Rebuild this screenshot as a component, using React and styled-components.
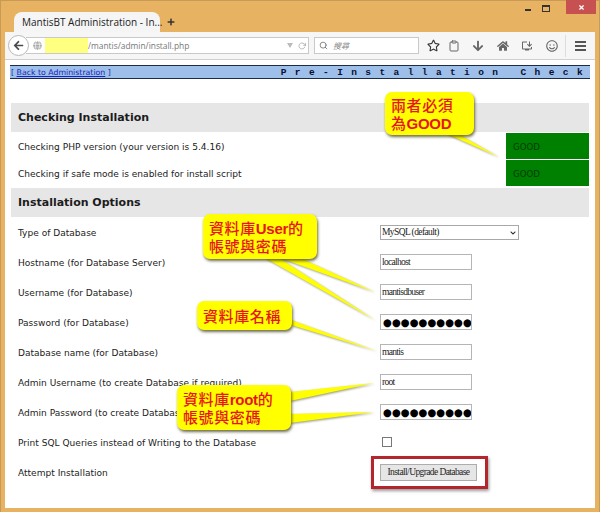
import React from "react";
import styled, { createGlobalStyle } from "styled-components";
import { FaRegStar, FaArrowLeft, FaArrowDown, FaHome, FaRegSmile, FaGlobe, FaPlus, FaTimes, FaChevronDown } from "react-icons/fa";
import { FiSearch, FiRotateCw, FiClipboard } from "react-icons/fi";
import { MdOutlineInstallDesktop } from "react-icons/md";

const Global = createGlobalStyle`
  html, body { margin: 0; padding: 0; background: #e8b263; }
  * { box-sizing: border-box; }
`;

const Window = styled.div`
  position: relative;
  width: 600px;
  height: 512px;
  overflow: hidden;
  background: #e8b263;
  box-shadow: inset 0 1px 0 #c99a55, inset 1px 0 0 #c99a55, inset -1px 0 0 #c99a55;
  padding: 0 5px 4px 5px;
  display: flex;
  flex-direction: column;
  font-family: "DejaVu Sans", Verdana, sans-serif;
`;

const TitleBar = styled.div`
  height: 32px;
  display: flex;
  align-items: flex-end;
  padding-left: 9px;
  position: relative;
`;

const Tab = styled.div`
  width: 146px;
  height: 20px;
  background: #f5f5f5;
  border-radius: 8px 8px 0 0;
  display: flex;
  align-items: center;
  justify-content: space-between;
  padding: 0 8px;
  font-family: "Open Sans", sans-serif;
  font-size: 10px;
  color: #222;
  white-space: nowrap;
`;

const NewTab = styled.div`
  margin: 0 0 6px 7px;
  display: flex;
  color: #333;
  font-size: 8px;
`;

const WindowControls = styled.div`
  position: absolute;
  top: 0;
  right: -1px;
  display: flex;
  align-items: flex-start;
  gap: 11px;
`;

const MinButton = styled.span`
  width: 6px;
  height: 2px;
  margin-top: 9px;
  background: #333;
`;

const MaxButton = styled.span`
  width: 8px;
  height: 7px;
  margin: 5px 5px 0 0;
  border: 1px solid #333;
  border-top-width: 2px;
`;

const CloseButton = styled.span`
  width: 30px;
  height: 14px;
  background: #c75050;
  color: #fff;
  display: flex;
  align-items: center;
  justify-content: center;
  font-size: 7px;
`;

const Toolbar = styled.div`
  height: 28px;
  background: #f6f6f6;
  border-bottom: 1px solid #d0d0d0;
  display: flex;
  align-items: center;
  padding-left: 3px;
`;

const BackButton = styled.div`
  width: 21px;
  height: 21px;
  border-radius: 50%;
  background: #fff;
  border: 1px solid #b8b8b8;
  margin-right: -3px;
  position: relative;
  display: flex;
  align-items: center;
  justify-content: center;
  color: #4a4a4a;
  font-size: 11px;
`;

const UrlBar = styled.div`
  width: 283px;
  height: 17px;
  background: #fff;
  border: 1px solid #c9c9c9;
  border-left: 0;
  display: flex;
  align-items: center;
  padding-left: 7px;
  font-family: "Open Sans", sans-serif;
  font-size: 8.4px;
  color: #777;
`;

const Masked = styled.span`
  width: 43px;
  height: 15px;
  background: #ffff80;
  margin-left: 3px;
`;

const UrlEnd = styled.span`
  margin-left: auto;
  display: flex;
  align-items: center;
  gap: 5px;
  padding-right: 2px;
  color: #999;
  font-size: 8px;
`;

const DropTriangle = styled.span`
  width: 0;
  height: 0;
  border: 3px solid transparent;
  border-top: 5px solid #bbb;
  border-bottom: 0;
`;

const SearchBar = styled.div`
  width: 105px;
  height: 17px;
  margin-left: 5px;
  background: #fff;
  border: 1px solid #c9c9c9;
  display: flex;
  align-items: center;
  gap: 5px;
  padding-left: 4px;
  font-family: "Noto Sans CJK TC", sans-serif;
  font-style: italic;
  font-size: 8px;
  color: #888;
`;

const ToolIcons = styled.div`
  display: flex;
  align-items: center;
  margin-left: 4px;
`;

const ToolIcon = styled.span`
  width: ${({ $w }) => $w || 24}px;
  display: flex;
  justify-content: center;
  font-size: ${({ $size }) => $size || 12}px;
  color: ${({ $light }) => ($light ? "#666" : "#333")};
`;

const Separator = styled.span`
  width: 1px;
  height: 22px;
  background: #ddd;
  margin-right: 9px;
`;

const Burger = styled.span`
  width: 11px;
  height: 10px;
  border-top: 2px solid #555;
  border-bottom: 2px solid #555;
  position: relative;
  &::after {
    content: "";
    position: absolute;
    left: 0;
    right: 0;
    top: 2px;
    height: 2px;
    background: #555;
  }
`;

const Page = styled.main`
  flex: 1;
  background: #fff;
  padding: 5px 5px 0 5px;
  font-size: 9.05px;
  color: #222;
`;

const Banner = styled.div`
  height: 14px;
  background: #9dbfe9;
  border-top: 1px solid #1c2c44;
  border-bottom: 1px solid #1c2c44;
  display: flex;
  align-items: center;
  justify-content: space-between;
  font-size: 7.8px;
  color: #1f2f9a;
  padding-left: 1px;
`;

const BackLink = styled.a`
  color: #1a22c0;
  text-decoration: underline;
`;

const BannerTitle = styled.span`
  font-family: "Liberation Mono", monospace;
  font-weight: bold;
  font-size: 9.5px;
  letter-spacing: 8.4px;
  color: #0a0f30;
  white-space: pre;
  margin-right: -1px;
`;

const Sections = styled.div`
  margin: 24px 1px 0 1px;
`;

const SectionHeader = styled.h2`
  margin: 0;
  height: 29px;
  background: #e6e6e6;
  padding-left: 7px;
  display: flex;
  align-items: center;
  font-size: 11px;
  font-weight: bold;
  color: #1c1c1c;
`;

const CheckRow = styled.div`
  height: 26px;
  margin-top: 1px;
  display: grid;
  grid-template-columns: 495px 83px;
  align-items: stretch;
`;

const RowLabel = styled.span`
  padding: 1px 0 0 7px;
  display: flex;
  align-items: center;
  white-space: nowrap;
`;

const Status = styled.span`
  background: #008000;
  color: #033a03;
  padding: 1px 0 0 7px;
  display: flex;
  align-items: center;
  font-size: 8.6px;
`;

const OptionsHeader = styled(SectionHeader)`
  margin-top: 2px;
`;

const FormRow = styled.div`
  height: 30px;
  display: grid;
  grid-template-columns: 369px 1fr;
  align-items: center;
`;

const ControlCell = styled.div`
  display: flex;
  align-items: center;
`;

const SelectBox = styled.div`
  position: relative;
  display: flex;
  width: 139px;
  color: #222;
  & > svg {
    position: absolute;
    right: 3px;
    top: 5px;
    pointer-events: none;
  }
`;

const Select = styled.select`
  appearance: none;
  width: 100%;
  height: 15px;
  font-family: "Liberation Serif", serif;
  font-size: 9.5px;
  letter-spacing: -0.6px;
  color: #222;
  background: #fff;
  border: 1px solid #a8a8a8;
  padding: 0 0 0 1px;
`;

const TextInput = styled.input`
  width: 92px;
  height: 16px;
  border: 1px solid #b5b5b5;
  padding: 0 1px;
  font-family: "Liberation Serif", serif;
  font-size: 9.5px;
  letter-spacing: -0.7px;
  color: #222;
  outline: none;
`;

const SecretInput = styled(TextInput)`
  font-family: "DejaVu Sans", sans-serif;
  font-size: 10.2px;
  color: #000;
  letter-spacing: 0;
  padding: 0 0 0 2px;
`;

const Check = styled.input`
  appearance: none;
  width: 10px;
  height: 10px;
  margin: 0 0 0 2px;
  border: 1px solid #777;
  background: #fff;
`;

const SubmitButton = styled.button`
  width: 97px;
  height: 17px;
  padding: 0;
  background: #e6e6e6;
  border: 1px solid #adadad;
  font-family: "Liberation Serif", serif;
  font-size: 9.5px;
  letter-spacing: -0.6px;
  white-space: nowrap;
  color: #222;
`;

const Highlight = styled.div`
  position: absolute;
  left: 371px;
  top: 456px;
  width: 117px;
  height: 33px;
  border: 3px solid #b3262e;
  box-shadow: 1px 2px 3px rgba(0, 0, 0, 0.4);
`;

const Tails = styled.svg`
  position: absolute;
  inset: 0;
  pointer-events: none;
  filter: drop-shadow(1px 1px 1px rgba(60, 60, 0, 0.55));
`;

const Callout = styled.div`
  position: absolute;
  left: ${({ $x }) => $x}px;
  top: ${({ $y }) => $y}px;
  width: ${({ $w }) => $w}px;
  height: ${({ $h }) => $h}px;
  background: #ffff00;
  border-radius: 7px;
  box-shadow: 1px 2px 3px rgba(50, 50, 0, 0.7);
  padding-left: 6px;
  display: flex;
  flex-direction: column;
  justify-content: center;
  font-family: "Noto Sans CJK TC", sans-serif;
  font-weight: 500;
  font-size: 15px;
  letter-spacing: 0.6px;
  color: #e8141c;
  white-space: nowrap;
`;

const CalloutLine = styled.div`
  height: 18px;
  line-height: 18px;
`;

const Latin = styled.b`
  font-family: "Liberation Sans", sans-serif;
  font-weight: bold;
  letter-spacing: -0.3px;
`;

const tailPoints = [
  "447,134 458,134 499,157",
  "280,258 300,258 375,292",
  "265,258 279,258 375,320",
  "291,320 291,325 377,351",
  "290,392 290,401 374,383",
  "290,414 290,423 374,412",
];

export default function App() {
  return (
    <Window>
      <Global />
      <TitleBar>
        <Tab>
          <span>MantisBT Administration - In...</span>
          <FaTimes size={7} color="#555" />
        </Tab>
        <NewTab><FaPlus /></NewTab>
        <WindowControls>
          <MinButton />
          <MaxButton />
          <CloseButton><FaTimes /></CloseButton>
        </WindowControls>
      </TitleBar>
      <Toolbar>
        <BackButton><FaArrowLeft /></BackButton>
        <UrlBar>
          <FaGlobe size={9} color="#aaa" />
          <Masked />
          <span>/mantis/admin/install.php</span>
          <UrlEnd><DropTriangle /><FiRotateCw /></UrlEnd>
        </UrlBar>
        <SearchBar><FiSearch size={9} color="#666" /><span>搜尋</span></SearchBar>
        <ToolIcons>
          <ToolIcon $w={20} $size={13}><FaRegStar /></ToolIcon>
          <ToolIcon $w={22} $light><FiClipboard /></ToolIcon>
          <ToolIcon $w={26} $light><FaArrowDown /></ToolIcon>
          <ToolIcon $w={24} $light><FaHome /></ToolIcon>
          <ToolIcon $w={24} $light><MdOutlineInstallDesktop /></ToolIcon>
          <ToolIcon $w={26} $light><FaRegSmile /></ToolIcon>
          <Separator />
          <Burger />
        </ToolIcons>
      </Toolbar>
      <Page>
        <Banner>
          <span>[ <BackLink>Back to Administration</BackLink> ]</span>
          <BannerTitle>Pre-Installation Check</BannerTitle>
        </Banner>
        <Sections>
          <SectionHeader>Checking Installation</SectionHeader>
          <CheckRow>
            <RowLabel>Checking PHP version (your version is 5.4.16)</RowLabel>
            <Status>GOOD</Status>
          </CheckRow>
          <CheckRow>
            <RowLabel>Checking if safe mode is enabled for install script</RowLabel>
            <Status>GOOD</Status>
          </CheckRow>
          <OptionsHeader>Installation Options</OptionsHeader>
          <FormRow>
            <RowLabel>Type of Database</RowLabel>
            <ControlCell>
              <SelectBox>
                <Select defaultValue="mysql"><option value="mysql">MySQL (default)</option></Select>
                <FaChevronDown size={6} />
              </SelectBox>
            </ControlCell>
          </FormRow>
          <FormRow>
            <RowLabel>Hostname (for Database Server)</RowLabel>
            <ControlCell><TextInput defaultValue="localhost" /></ControlCell>
          </FormRow>
          <FormRow>
            <RowLabel>Username (for Database)</RowLabel>
            <ControlCell><TextInput defaultValue="mantisdbuser" /></ControlCell>
          </FormRow>
          <FormRow>
            <RowLabel>Password (for Database)</RowLabel>
            <ControlCell><SecretInput defaultValue="●●●●●●●●●●●" /></ControlCell>
          </FormRow>
          <FormRow>
            <RowLabel>Database name (for Database)</RowLabel>
            <ControlCell><TextInput defaultValue="mantis" /></ControlCell>
          </FormRow>
          <FormRow>
            <RowLabel>Admin Username (to create Database if required)</RowLabel>
            <ControlCell><TextInput defaultValue="root" /></ControlCell>
          </FormRow>
          <FormRow>
            <RowLabel>Admin Password (to create Database if required)</RowLabel>
            <ControlCell><SecretInput defaultValue="●●●●●●●●●●●" /></ControlCell>
          </FormRow>
          <FormRow>
            <RowLabel>Print SQL Queries instead of Writing to the Database</RowLabel>
            <ControlCell><Check type="checkbox" /></ControlCell>
          </FormRow>
          <FormRow>
            <RowLabel>Attempt Installation</RowLabel>
            <ControlCell><SubmitButton>Install/Upgrade Database</SubmitButton></ControlCell>
          </FormRow>
        </Sections>
      </Page>
      <Highlight />
      <Tails width="600" height="512">
        {tailPoints.map((p) => <polygon key={p} points={p} fill="#ffff00" />)}
      </Tails>
      <Callout $x={385} $y={92} $w={89} $h={43}>
        <CalloutLine>兩者必須</CalloutLine>
        <CalloutLine>為<Latin>GOOD</Latin></CalloutLine>
      </Callout>
      <Callout $x={203} $y={214} $w={114} $h={45}>
        <CalloutLine>資料庫<Latin>User</Latin>的</CalloutLine>
        <CalloutLine>帳號與密碼</CalloutLine>
      </Callout>
      <Callout $x={197} $y={301} $w={95} $h={29}>
        <CalloutLine>資料庫名稱</CalloutLine>
      </Callout>
      <Callout $x={177} $y={385} $w={114} $h={45}>
        <CalloutLine>資料庫<Latin>root</Latin>的</CalloutLine>
        <CalloutLine>帳號與密碼</CalloutLine>
      </Callout>
    </Window>
  );
}
